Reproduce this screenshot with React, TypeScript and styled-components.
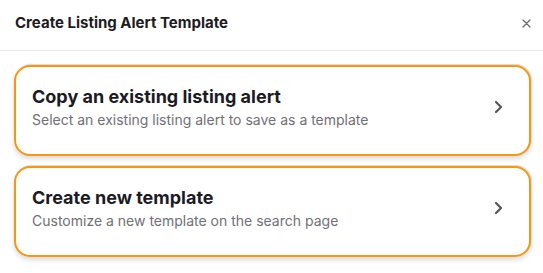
import React from "react";
import styled, { createGlobalStyle } from "styled-components";

const Global = createGlobalStyle`
  html, body { margin: 0; padding: 0; background: #ffffff; }
  body { font-family: Inter, "Noto Sans", sans-serif; -webkit-font-smoothing: antialiased; }
  * { box-sizing: border-box; }
`;

const Dialog = styled.div`
  width: 543px;
  height: 273px;
  background: #fff;
  display: flex;
  flex-direction: column;
`;

const Header = styled.div`
  height: 51px;
  display: flex;
  align-items: center;
  justify-content: space-between;
  padding: 0 11px 4px 15px;
  border-bottom: 1px solid #e8e8ea;
`;

const Title = styled.h2`
  margin: 0;
  font-size: 15px;
  line-height: 20px;
  font-weight: 700;
  color: #1c1c22;
`;

const CloseButton = styled.button`
  border: none;
  background: transparent;
  padding: 0;
  width: 12px;
  height: 12px;
  display: flex;
  align-items: center;
  justify-content: center;
  color: #6b6b70;
  cursor: pointer;
`;

const Body = styled.div`
  display: flex;
  flex-direction: column;
  gap: 10px;
  padding: 14px 12px 0 14px;
`;

const Card = styled.button`
  width: 100%;
  height: 91px;
  display: flex;
  align-items: center;
  gap: 16px;
  padding: 17px 26px 24px 16px;
  background: #fff;
  border: 2px solid #f7960f;
  border-radius: 16px;
  box-shadow: 1px -1px 0 0 #dcdcdc, 0 3px 5px rgba(0, 0, 0, 0.14);
  text-align: left;
  font-family: inherit;
  cursor: pointer;
`;

const CardText = styled.div`
  flex: 1;
  display: flex;
  flex-direction: column;
  gap: 3px;
`;

const CardTitle = styled.div`
  font-size: 18px;
  line-height: 22px;
  font-weight: 700;
  color: #1b1b24;
`;

const CardSubtitle = styled.div`
  font-size: 14px;
  line-height: 18px;
  font-weight: 400;
  color: #707076;
`;

const Chevron = styled.span`
  display: flex;
  color: #55555a;
`;

const ChevronIcon = () => (
  <svg width="9" height="14" viewBox="0 0 9 14" fill="none">
    <path d="M2 2l5 5-5 5" stroke="currentColor" strokeWidth="2.2" strokeLinecap="round" strokeLinejoin="round" />
  </svg>
);

const CloseIcon = () => (
  <svg width="9" height="9" viewBox="0 0 9 9" fill="none">
    <path d="M1 1l7 7M8 1L1 8" stroke="currentColor" strokeWidth="1.3" strokeLinecap="round" />
  </svg>
);

const options = [
  { title: "Copy an existing listing alert", subtitle: "Select an existing listing alert to save as a template" },
  { title: "Create new template", subtitle: "Customize a new template on the search page" },
];

export default function App() {
  return (
    <>
      <Global />
      <Dialog>
        <Header>
          <Title>Create Listing Alert Template</Title>
          <CloseButton aria-label="Close">
            <CloseIcon />
          </CloseButton>
        </Header>
        <Body>
          {options.map((o) => (
            <Card key={o.title}>
              <CardText>
                <CardTitle>{o.title}</CardTitle>
                <CardSubtitle>{o.subtitle}</CardSubtitle>
              </CardText>
              <Chevron>
                <ChevronIcon />
              </Chevron>
            </Card>
          ))}
        </Body>
      </Dialog>
    </>
  );
}
